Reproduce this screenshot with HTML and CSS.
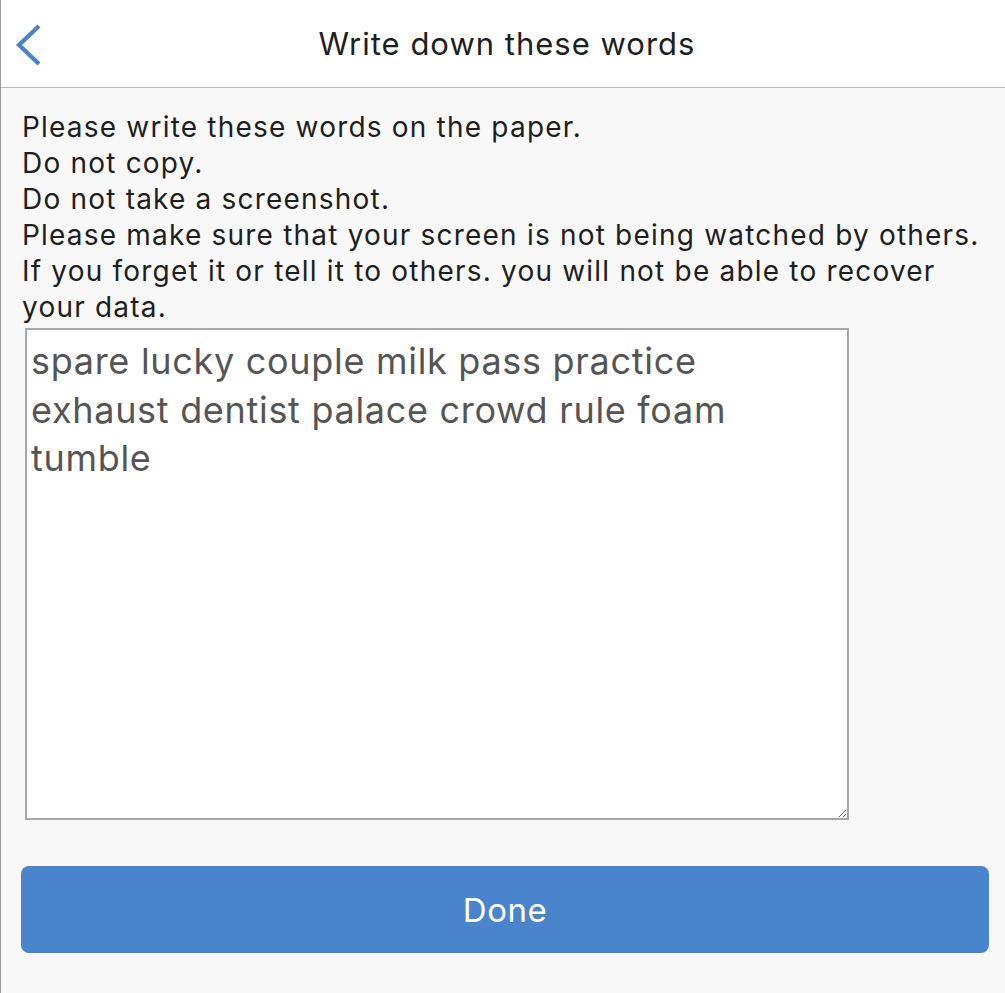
FILE: index.html
```html
<!DOCTYPE html>
<html>
<head>
<meta charset="utf-8">
<link rel="stylesheet" href="styles.css">
</head>
<body>
<div class="page">
  <header class="navbar">
    <button class="back" aria-label="Back">
      <svg width="30" height="44" viewBox="0 0 30 44"><polyline points="24,3 4,22 24,41" fill="none" stroke="#4a84c8" stroke-width="4.2" stroke-linecap="butt" stroke-linejoin="miter"/></svg>
    </button>
    <h1 class="title">Write down these words</h1>
  </header>
  <main class="content">
    <p class="notice">Please write these words on the paper.<br>Do not copy.<br>Do not take a screenshot.<br>Please make sure that your screen is not being watched by others.<br>If you forget it or tell it to others. you will not be able to recover your data.</p>
    <textarea class="words" readonly>spare lucky couple milk pass practice exhaust dentist palace crowd rule foam tumble</textarea>
    <button class="done">Done</button>
  </main>
</div>
</body>
</html>
```
FILE: styles.css
```css
html, body {
  margin: 0;
  padding: 0;
  height: 100%;
}
body {
  background: #f8f8f8;
  font-family: Inter, "Liberation Sans", Arial, sans-serif;
  color: #1e1e1e;
}
.page {
  min-height: 100%;
  border-left: 1px solid #9a9a9a;
  box-sizing: border-box;
}
.navbar {
  height: 87px;
  background: #fff;
  border-bottom: 1px solid #b9b9b9;
  display: flex;
  align-items: center;
  justify-content: center;
  position: relative;
}
.back {
  position: absolute;
  left: 14px;
  top: 23px;
  width: 30px;
  height: 44px;
  padding: 0;
  border: 0;
  background: none;
}
.back svg { display: block; }
.title {
  margin: 0;
  font-size: 31px;
  font-weight: normal;
  letter-spacing: 1px;
  color: #1e1e1e;
  padding-left: 8px;
}
.content {
  padding: 21px 15px 0 20px;
  display: flex;
  flex-direction: column;
}
.notice {
  margin: 0;
  padding-left: 1px;
  font-size: 28px;
  line-height: 36px;
  letter-spacing: 1.2px;
}
.words {
  margin: 3px 0 0 4px;
  width: 824px;
  height: 492px;
  box-sizing: border-box;
  border: 2px solid #a8a8a8;
  background: #fff;
  padding: 7px 4px;
  font-family: Inter, "Liberation Sans", Arial, sans-serif;
  font-size: 36px;
  line-height: 48.5px;
  letter-spacing: 0.7px;
  color: #555;
  resize: both;
  outline: none;
}
.done {
  margin-top: 46px;
  width: 968px;
  height: 87px;
  border: 0;
  border-radius: 8px;
  background: #4a84cd;
  color: #fff;
  font-family: Inter, "Liberation Sans", Arial, sans-serif;
  font-size: 33px;
  letter-spacing: 0.5px;
}
```
